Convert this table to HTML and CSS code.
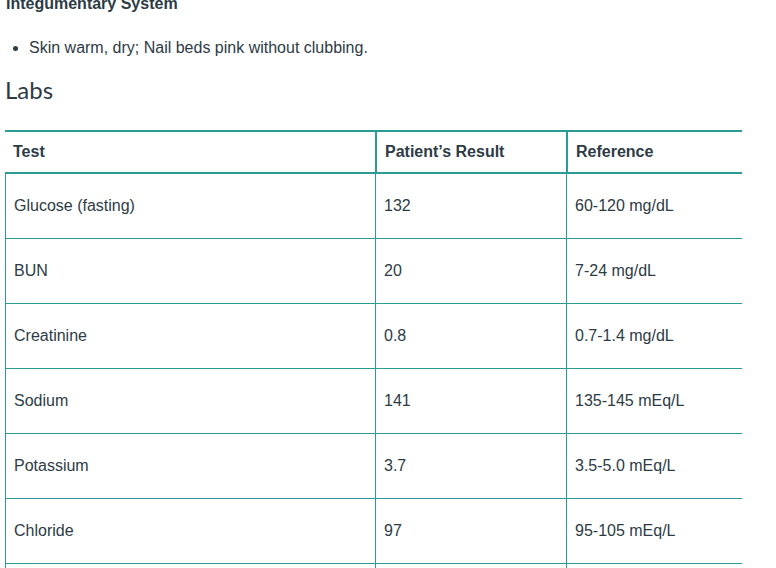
FILE: index.html
```html
<!DOCTYPE html>
<html lang="en">
<head>
<meta charset="utf-8">
<title>Labs</title>
<link rel="stylesheet" href="styles.css">
</head>
<body>
<div class="content">
  <h4 class="subhead">Integumentary System</h4>
  <ul class="findings">
    <li>Skin warm, dry; Nail beds pink without clubbing.</li>
  </ul>
  <h2 class="section-title">Labs</h2>
  <div class="table-wrap">
    <table class="labs">
      <colgroup>
        <col class="c1"><col class="c2"><col class="c3">
      </colgroup>
      <thead>
        <tr><th>Test</th><th>Patient’s Result</th><th>Reference</th></tr>
      </thead>
      <tbody>
        <tr><td>Glucose (fasting)</td><td>132</td><td>60-120 mg/dL</td></tr>
        <tr><td>BUN</td><td>20</td><td>7-24 mg/dL</td></tr>
        <tr><td>Creatinine</td><td>0.8</td><td>0.7-1.4 mg/dL</td></tr>
        <tr><td>Sodium</td><td>141</td><td>135-145 mEq/L</td></tr>
        <tr><td>Potassium</td><td>3.7</td><td>3.5-5.0 mEq/L</td></tr>
        <tr><td>Chloride</td><td>97</td><td>95-105 mEq/L</td></tr>
        <tr><td>Bicarbonate</td><td>24</td><td>22-28 mEq/L</td></tr>
      </tbody>
    </table>
  </div>
</div>
</body>
</html>
```
FILE: styles.css
```css
html, body {
  margin: 0;
  padding: 0;
  background: #ffffff;
}
body {
  font-family: "Liberation Sans", Arial, sans-serif;
  font-size: 16px;
  color: #2d3b45;
  overflow: hidden;
}
.content {
  padding: 0 5px;
}
.subhead {
  margin: -8.5px 0 0 1px;
  font-size: 16px;
  font-weight: bold;
  line-height: 24px;
}
.findings {
  margin: 20px 0 0 0;
  padding-left: 24px;
  line-height: 24px;
}
.section-title {
  margin: 16.3px 0 0 0;
  font-family: Lato, "Liberation Sans", sans-serif;
  font-weight: 400;
  font-size: 24px;
  line-height: 28.8px;
}
.table-wrap {
  margin-top: 25.4px;
  width: 737px;
  overflow: hidden;
}
.labs {
  table-layout: fixed;
  width: 900px;
  border-collapse: separate;
  border-spacing: 0;
}
.labs .c1 { width: 370px; }
.labs .c2 { width: 191px; }
.labs .c3 { width: 339px; }
.labs th {
  text-align: left;
  font-weight: bold;
  line-height: 18px;
  padding: 11px 8px;
  border-top: 2px solid #2b9b98;
  border-bottom: 2px solid #2b9b98;
}
.labs th + th {
  border-left: 2px solid #2b9b98;
}
.labs td {
  line-height: 18px;
  padding: 23px 8px;
  border-left: 1px solid #2b9b98;
  border-bottom: 1px solid #2b9b98;
}
```
